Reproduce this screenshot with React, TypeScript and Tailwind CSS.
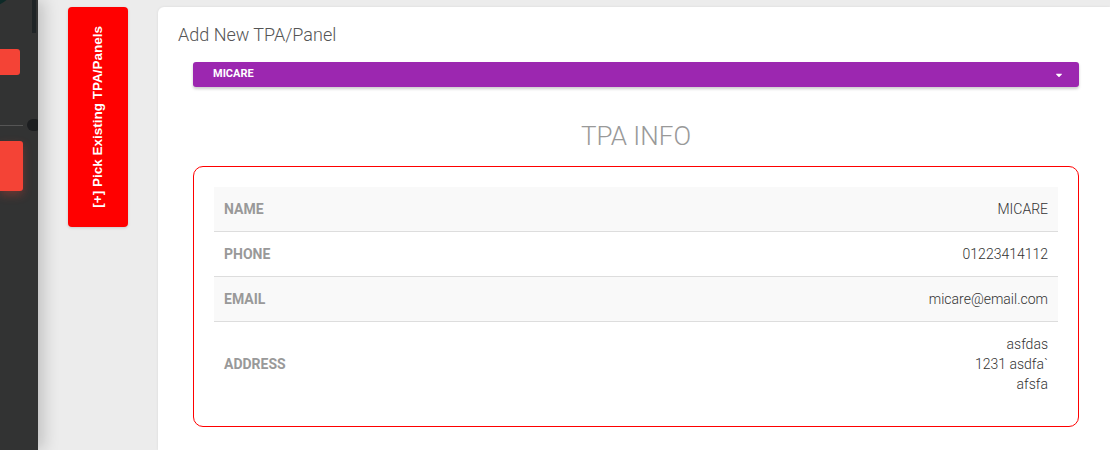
import { FaCaretDown } from "react-icons/fa";

const rows = [
    { label: "NAME", value: ["MICARE"] },
    { label: "PHONE", value: ["01223414112"] },
    { label: "EMAIL", value: ["micare@email.com"] },
    { label: "ADDRESS", value: ["asfdas", "1231 asdfa`", "afsfa"] },
];

function App() {
    return (
        <div className="h-[450px] w-[1110px] overflow-hidden flex bg-[#ececec] font-['Roboto',sans-serif]">

            {/* Sidebar */}

            <div className="relative w-[38px] shrink-0 h-full bg-[#323333] shadow-[6px_0_16px_rgba(0,0,0,0.18)] z-10 overflow-hidden">
                <div className="absolute -left-8 -top-10 w-[46px] h-[46px] rounded-full bg-[#0e2a28]"></div>
                <div className="absolute left-[32px] top-0 w-[4px] h-[33px] bg-[#1f2426]"></div>
                <div className="absolute left-0 top-[49px] w-[20px] h-[26px] rounded-r-[3px] bg-[#f44336]"></div>
                <div className="absolute left-0 top-[125px] w-[23px] h-[1px] bg-[#555]"></div>
                <div className="absolute left-[27px] top-[119px] w-[14px] h-[12px] rounded-full bg-[#1c1e20]"></div>
                <div className="absolute left-0 top-[141px] w-[23px] h-[50px] rounded-r-[3px] bg-[#f44336] shadow-[0_4px_10px_rgba(244,67,54,0.3)]"></div>
            </div>

            {/* Pick existing button */}

            <div className="w-[120px] shrink-0 pt-[7px] flex justify-center">
                <div className="w-[60px] h-[220px] rounded-[4px] bg-[#ff0000] flex items-center justify-center cursor-pointer shadow-[0_1px_3px_rgba(0,0,0,0.15)]">
                    <span className="[writing-mode:vertical-rl] rotate-180 text-white font-bold text-[13.5px] font-['Liberation_Sans',Arial,sans-serif] whitespace-nowrap">[+] Pick Existing TPA/Panels</span>
                </div>
            </div>

            {/* Card */}

            <div className="mt-[7px] flex-1 bg-white rounded-tl-[6px] shadow-[0_0_3px_rgba(0,0,0,0.08)] pl-[20px] pr-[31px]">
                <div className="pt-[17px] text-[18px] font-light text-[#555] leading-[22px]">Add New TPA/Panel</div>

                <div className="ml-[15px] mt-[16px] h-[25px] rounded-[3px] bg-[#9c27b0] shadow-[0_2px_3px_rgba(0,0,0,0.2)] flex items-center justify-between pl-[20px] pr-[15px]">
                    <span className="text-white text-[11px] font-bold">MICARE</span>
                    <FaCaretDown className="text-white w-[10px] h-[10px]" />
                </div>

                <div className="ml-[15px] mt-[36px] text-center text-[26px] font-light text-[#999] leading-[26px]">TPA INFO</div>

                <div className="ml-[15px] mt-[17px] border border-[#ff0000] rounded-[10px] px-[20px] pt-[20px] pb-[20px]">
                    <table className="w-full border-collapse">
                        <tbody>
                            {rows.map((r, i) => (
                                <tr key={r.label} className={`${i % 2 === 0 ? "bg-[#f9f9f9]" : "bg-white"} ${i < rows.length - 1 ? "border-b border-[#dddddd]" : ""}`}>
                                    <td className="pl-[10px] text-[14px] font-bold text-[#999] py-[12px] leading-[20px]">{r.label}</td>
                                    <td className="pr-[10px] text-right text-[14px] font-light text-[#333] py-[12px] leading-[20px]">
                                        {r.value.map((v) => (
                                            <div key={v}>{v}</div>
                                        ))}
                                    </td>
                                </tr>
                            ))}
                        </tbody>
                    </table>
                </div>
            </div>
        </div>
    );
}

export default App;
